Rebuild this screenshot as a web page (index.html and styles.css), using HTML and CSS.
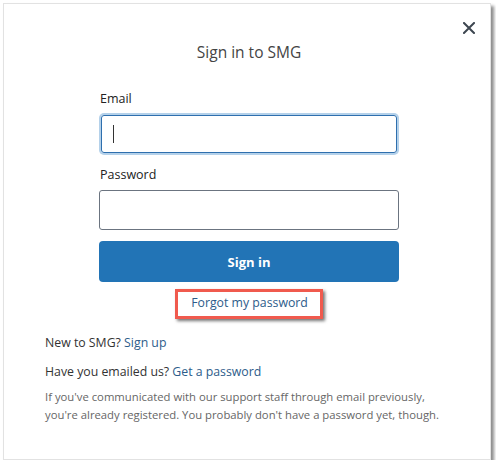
FILE: index.html
```html
<!DOCTYPE html>
<html>
<head>
<meta charset="utf-8">
<link rel="stylesheet" href="styles.css">
</head>
<body>
<div class="modal">
  <button class="close" aria-label="Close">
    <svg width="12" height="12" viewBox="0 0 12 12"><path d="M1 1L11 11M11 1L1 11" stroke="#3d4650" stroke-width="2" stroke-linecap="square"/></svg>
  </button>
  <h1 class="title">Sign in to SMG</h1>
  <form class="form">
    <label class="label">Email</label>
    <div class="input focused"><span class="caret"></span></div>
    <label class="label">Password</label>
    <div class="input"></div>
    <button type="button" class="btn">Sign in</button>
    <div class="forgot-row"><a class="forgot">Forgot my password</a></div>
  </form>
  <div class="footer">
    <p class="line">New to SMG? <a class="link">Sign up</a></p>
    <p class="line second">Have you emailed us? <a class="link">Get a password</a></p>
    <p class="note">If you've communicated with our support staff through email previously,<br>you're already registered. You probably don't have a password yet, though.</p>
  </div>
</div>
</body>
</html>
```
FILE: styles.css
```css
* { box-sizing: border-box; }
html, body { margin: 0; padding: 0; background: #fff; }
body { font-family: "Open Sans", "Noto Sans", sans-serif; color: #333; }
.modal {
  position: relative;
  margin: 3px 0 0 3px;
  width: 488px;
  height: 457px;
  background: #fff;
  border: 1px solid #e2e2e2;
  box-shadow: 3px 3px 3px rgba(0,0,0,0.45);
  padding: 0;
}
.close {
  position: absolute;
  right: 14px;
  top: 17px;
  border: 0;
  background: none;
  padding: 0;
  width: 14px;
  height: 14px;
  display: flex;
  align-items: center;
  justify-content: center;
}
.title {
  margin: 0;
  padding: 37px 0 0 4px;
  text-align: center;
  font-size: 15.5px;
  font-weight: 400;
  color: #444;
  line-height: 22px;
}
.form {
  width: 300px;
  margin: 27px 0 0 95px;
  display: flex;
  flex-direction: column;
}
.label {
  font-size: 12.5px;
  color: #222;
  line-height: 18px;
  padding-left: 1px;
}
.input {
  height: 40px;
  border: 1px solid #6b7480;
  border-radius: 3px;
  margin: 6px 0 11px;
  position: relative;
}
.input.focused {
  border: 1px solid #2e6fae;
  box-shadow: 0 0 0 2px #b4d1ea;
  height: 38px;
  margin: 7px 2px 13px;
}
.caret {
  position: absolute;
  left: 11px;
  top: 9px;
  width: 1px;
  height: 18px;
  background: #333;
}
.btn {
  height: 41px;
  border: 0;
  border-radius: 4px;
  background: #2274b6;
  color: #fff;
  font-family: inherit;
  font-weight: 700;
  font-size: 13px;
  margin: 0;
}
.forgot-row {
  display: flex;
  justify-content: center;
  margin-top: 7px;
}
.forgot {
  display: block;
  border: 3px solid #f05a4e;
  box-shadow: 2px 2px 3px rgba(0,0,0,0.55);
  padding: 2px 12px 4px 13px;
  font-size: 12.3px;
  color: #2d5c8a;
  line-height: 18px;
}
.footer {
  padding: 15px 0 0 41px;
}
.line {
  margin: 0 0 11px;
  font-size: 12.3px;
  color: #333;
  line-height: 18px;
}
.line.second { margin-bottom: 7px; }
.link { color: #2d5c8a; }
.note {
  margin: 0;
  font-size: 11.3px;
  line-height: 18px;
  color: #666;
}
```
